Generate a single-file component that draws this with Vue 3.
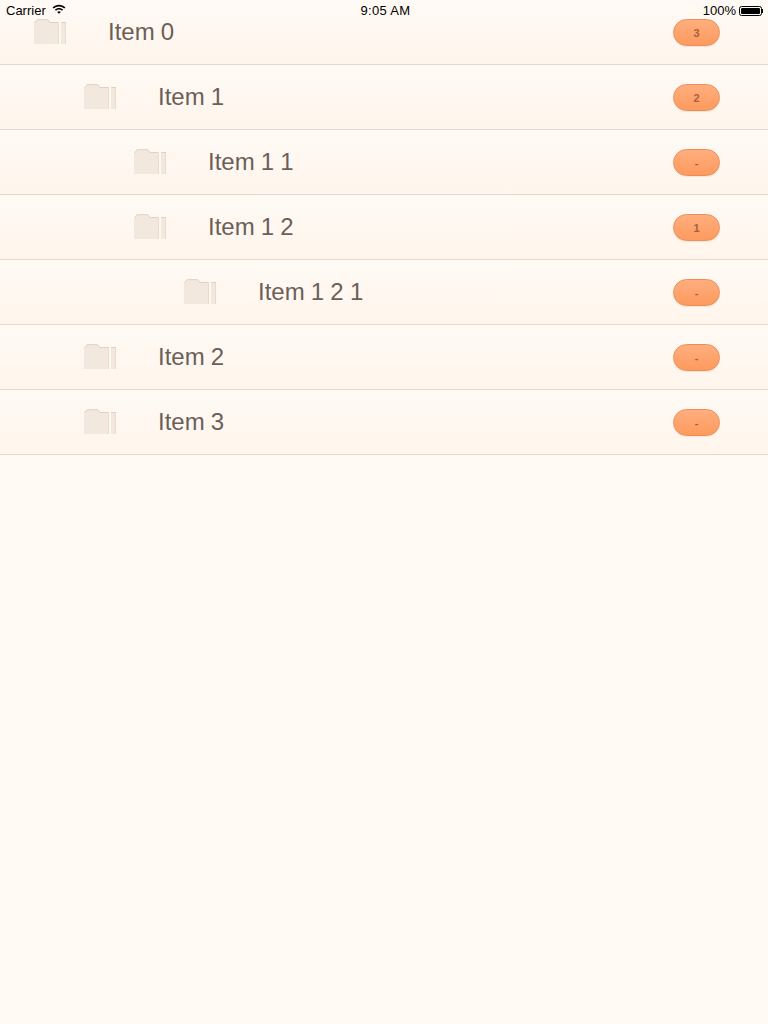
<script setup>
const items = [
  { name: 'Item 0', level: 0, count: '3' },
  { name: 'Item 1', level: 1, count: '2' },
  { name: 'Item 1 1', level: 2, count: '-' },
  { name: 'Item 1 2', level: 2, count: '1' },
  { name: 'Item 1 2 1', level: 3, count: '-' },
  { name: 'Item 2', level: 1, count: '-' },
  { name: 'Item 3', level: 1, count: '-' },
];
</script>
<template>
  <div class="screen">
    <div class="status">
      <div class="status-left">
        <span>Carrier</span>
        <svg class="wifi" width="14" height="10" viewBox="0 0 14 10">
          <path d="M0.6 3.4C4.2 0 9.8 0 13.4 3.4L12.3 4.6C9.3 1.9 4.7 1.9 1.7 4.6Z" fill="#000" />
          <path d="M2.9 5.6C5.2 3.5 8.8 3.5 11.1 5.6L10 6.8C8.3 5.2 5.7 5.2 4 6.8Z" fill="#000" />
          <path d="M5.2 7.9C6.2 7 7.8 7 8.8 7.9L7 9.8Z" fill="#000" />
        </svg>
      </div>
      <span class="status-time">9:05 AM</span>
      <div class="status-right">
        <span>100%</span>
        <span class="battery"><span class="battery-fill"></span></span>
        <span class="battery-tip"></span>
      </div>
    </div>
    <div class="row" v-for="item in items" :key="item.name" :style="{ paddingLeft: 34 + item.level * 50 + 'px' }">
      <svg class="folder" width="32" height="25" viewBox="0 0 32 25">
        <path d="M0 4L3 0.5H14L16 3H24.5V25H0Z" fill="#f2e8de" />
        <path d="M0.5 4L3.2 0.7H13.8L15.8 3.5H24.5" fill="none" stroke="#dfd2c5" stroke-width="1" />
        <path d="M24.5 3.5V25" stroke="#e8dccf" stroke-width="1" />
        <path d="M27 3H32V25H27Z" fill="#f2e8de" />
        <path d="M27 3.5H32" stroke="#dfd2c5" stroke-width="1" />
        <path d="M31.5 4V25" stroke="#e8dccf" stroke-width="1" />
      </svg>
      <span class="name">{{ item.name }}</span>
      <span class="badge">{{ item.count }}</span>
    </div>
  </div>
</template>
<style scoped>
.screen {
  position: relative;
  width: 768px;
  height: 1024px;
  overflow: hidden;
  background: #fffaf4;
  font-family: "Liberation Sans", Arial, sans-serif;
}
.status {
  position: absolute;
  top: 0;
  left: 0;
  right: 0;
  height: 21px;
  padding: 0 5px 0 6px;
  box-sizing: border-box;
  display: flex;
  align-items: center;
  justify-content: space-between;
  font-size: 13px;
  color: #000;
  z-index: 1;
}
.status-left,
.status-right {
  width: 120px;
  display: flex;
  align-items: center;
}
.status-left {
  gap: 6px;
}
.status-right {
  justify-content: flex-end;
  gap: 3px;
}
.status-time {
  margin-left: 2px;
  letter-spacing: 0.3px;
}
.wifi {
  margin-top: -3px;
}
.battery {
  width: 23px;
  height: 10px;
  border: 1px solid #000;
  border-radius: 2.5px;
  box-sizing: border-box;
  padding: 1px;
  display: block;
}
.battery-fill {
  display: block;
  height: 100%;
  background: #000;
  border-radius: 1px;
}
.battery-tip {
  width: 1px;
  height: 4px;
  margin-left: -3px;
  background: #000;
}
.row {
  height: 65px;
  box-sizing: border-box;
  display: flex;
  align-items: center;
  padding-right: 48px;
  border-bottom: 1px solid #e6d8cc;
  background: linear-gradient(#fffaf5, #fff5ec);
}
.folder {
  flex: none;
  margin-top: -1px;
  margin-right: 42px;
}
.name {
  flex: 1;
  font-size: 24px;
  line-height: 28px;
  word-spacing: -0.5px;
  color: #6b5f58;
}
.badge {
  width: 47px;
  height: 27px;
  box-sizing: border-box;
  border: 1px solid #ec8e58;
  border-radius: 13.5px;
  background: linear-gradient(#ffae7e, #fd9a5e);
  box-shadow: 0 1px 1px #f0e4da;
  color: #a8603d;
  font-size: 11px;
  font-weight: bold;
  line-height: 27px;
  text-align: center;
}
</style>
